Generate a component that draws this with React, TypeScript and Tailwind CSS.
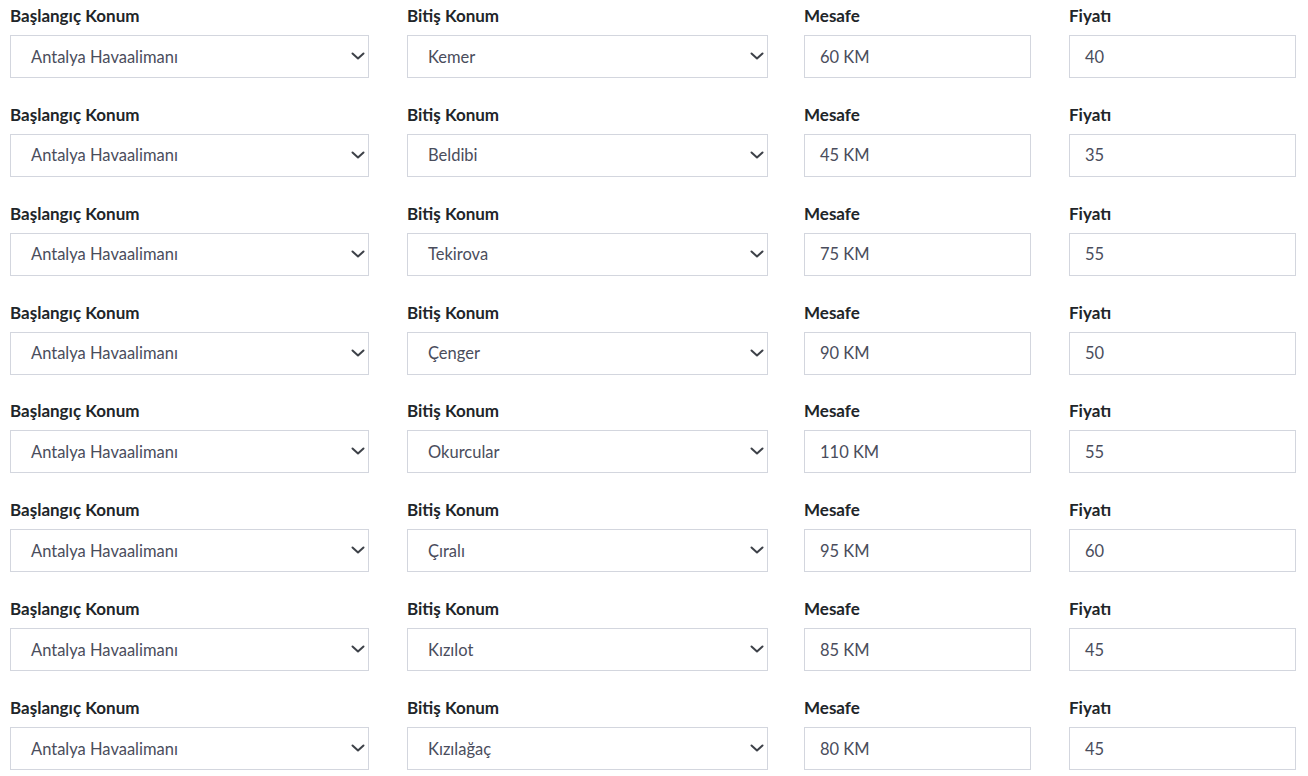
const rows = [
  { end: "Kemer", km: "60 KM", price: "40" },
  { end: "Beldibi", km: "45 KM", price: "35" },
  { end: "Tekirova", km: "75 KM", price: "55" },
  { end: "Çenger", km: "90 KM", price: "50" },
  { end: "Okurcular", km: "110 KM", price: "55" },
  { end: "Çıralı", km: "95 KM", price: "60" },
  { end: "Kızılot", km: "85 KM", price: "45" },
  { end: "Kızılağaç", km: "80 KM", price: "45" },
]

function Chevron() {
  return (
    <svg width="14" height="8" viewBox="0 0 14 8" className="absolute right-[3px] top-[16px]">
      <path d="M1.5 1.5L7 6.5L12.5 1.5" fill="none" stroke="#3d4148" strokeWidth="2" strokeLinecap="round" strokeLinejoin="round" />
    </svg>
  )
}

function Select(props: any) {
  return (
    <div className="relative h-[43px] border border-[#d3d6de] bg-white flex items-center pl-[20px] pt-[1px] text-[16.5px] text-[#4a4d5c]">
      <span>{props.value}</span>
      <Chevron />
    </div>
  )
}

function Field(props: any) {
  return (
    <div className="h-[43px] border border-[#d3d6de] bg-white flex items-center pl-[15px] pt-[1px] text-[16.5px] text-[#4a4d5c]">
      {props.value}
    </div>
  )
}

function Label(props: any) {
  return <div className="h-6 leading-6 mb-[7px] text-[17px] font-bold text-[#212529]">{props.children}</div>
}

export default function App() {
  return (
    <div className="w-[1308px] h-[776px] overflow-hidden bg-white pt-[4px] pl-[10px] font-['Lato','Noto_Sans',sans-serif]">
      <div className="flex flex-col gap-y-[24.86px]">
        {rows.map((r, i) => (
          <div key={i} className="flex">
            <div className="w-[359px] mr-[38px]">
              <Label>Başlangıç Konum</Label>
              <Select value="Antalya Havaalimanı" />
            </div>
            <div className="w-[361px] mr-[36px]">
              <Label>Bitiş Konum</Label>
              <Select value={r.end} />
            </div>
            <div className="w-[227px] mr-[38px]">
              <Label>Mesafe</Label>
              <Field value={r.km} />
            </div>
            <div className="w-[227px]">
              <Label>Fiyatı</Label>
              <Field value={r.price} />
            </div>
          </div>
        ))}
      </div>
    </div>
  )
}
